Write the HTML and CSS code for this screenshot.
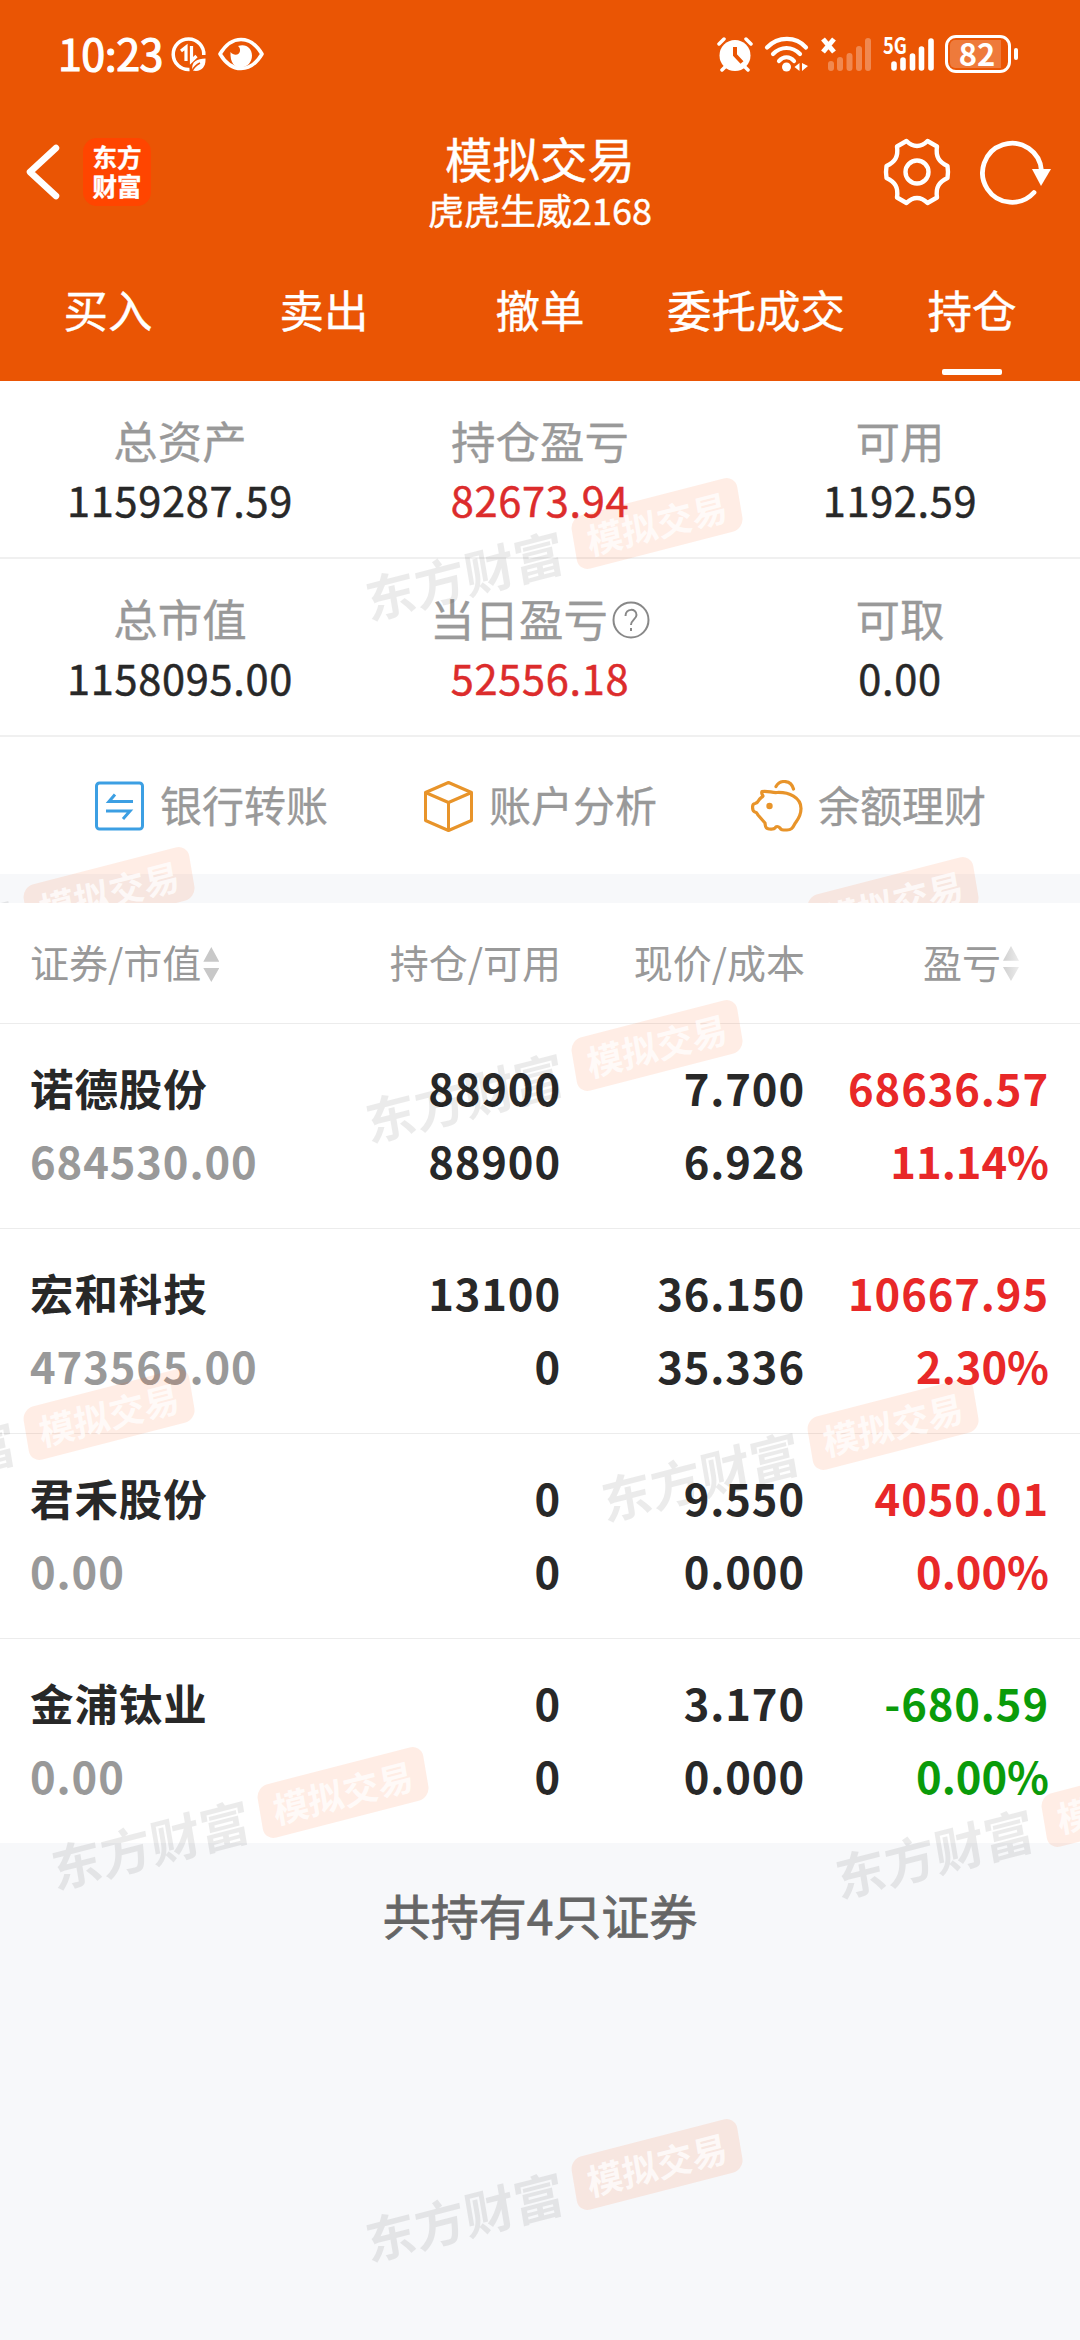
FILE: index.html
```html
<!DOCTYPE html>
<html lang="zh">
<head>
    <meta charset="UTF-8">
    <meta name="viewport" content="width=device-width, initial-scale=1.0">
    <title>模拟交易</title>
    <link rel="stylesheet" href="styles.css">
</head>
<body>
    <header class="header">
        <div class="status-bar">
            <div class="status-left">
                <span class="time">10:23</span>
                <svg class="icon-data" width="36" height="36" viewBox="0 0 36 36" fill="none" stroke="#fff">
                    <path d="M18.500 33.500A15.300 15.300 0 1 1 32.800 19" stroke-width="3.500"/>
                    <path d="M10 15l5-4v14M20.500 10v15l5-5" stroke-width="3.200"/>
                    <path d="M21.500 34.500c-1.500-8 3-11.500 13-12 .5 8-4 14-13 12z" fill="#fff" stroke="none"/>
                    <path d="M21 35c2-4 4-6 8-8" stroke="#ea5504" stroke-width="1.500"/>
                </svg>
                <svg class="icon-eye" width="46" height="34" viewBox="0 0 46 34">
                    <path d="M2 17C8 7 15 2.500 23 2.500S38 7 44 17C38 27 31 31.500 23 31.500S8 27 2 17z" fill="none" stroke="#fff" stroke-width="3.600" stroke-linejoin="round"/>
                    <path d="M20 9c8-3 14 2.500 14 9.500 0 7-5 12-11.500 12S12 25 12.500 15c3 4 9 3.500 9.500-1 .3-3-1-4-2-5z" fill="#fff"/>
                </svg>
            </div>
            <div class="status-right">
                <svg class="icon-alarm" width="36" height="36" viewBox="0 0 36 36" fill="none" stroke="#fff" stroke-linecap="round">
                    <circle cx="18" cy="19.500" r="15.500" fill="#fff" stroke="none"/>
                    <path d="M2 8l5-5M34 8l-5-5M8 31l-3 3M28 31l3 3" stroke-width="3.500"/>
                    <path d="M18 11v8l7 7.500" stroke="#ea5504" stroke-width="4" stroke-linecap="butt"/>
                </svg>
                <svg class="icon-wifi" width="46" height="36" viewBox="0 0 46 36" fill="none" stroke="#fff" stroke-width="4.200" stroke-linecap="round">
                    <path d="M3 11.500C14 0 32 0 42 11.500M9 18c8-8 19-8 27 0M15 25c4-5 11-5 15 0"/>
                    <circle cx="22.500" cy="31" r="4.500" fill="#fff" stroke="none"/>
                    <path d="M35.500 27v8l-5-4zM38 27v8l6-5z" fill="#fff" stroke="none"/>
                </svg>
                <svg class="icon-signal" width="51" height="36" viewBox="0 0 51 36" stroke="#fff" stroke-width="6" stroke-linecap="round">
                    <path d="M2 3l11 13M13 3L2 16" stroke-width="5" stroke-linecap="butt"/>
                    <path d="M10 28v4M19 24v8M28.500 20v12M38 13v19M47 5v27" opacity=".3"/>
                </svg>
                <svg class="icon-signal" width="51" height="36" viewBox="0 0 51 36" stroke="#fff" stroke-width="5.600" stroke-linecap="round">
                    <text class="net-type" x="0" y="18" textLength="24" lengthAdjust="spacingAndGlyphs">5G</text>
                    <path d="M11 28v4M20 24v8M29.500 20v12M38.500 13v19M48 5v27"/>
                </svg>
                <div class="battery"><span class="battery-level">82</span></div>
                <i class="battery-cap"></i>
            </div>
        </div>
        <div class="title-bar">
            <div class="title-left">
                <svg width="36" height="60" viewBox="0 0 36 60" fill="none" stroke="#fff" stroke-width="6.500" stroke-linecap="round" stroke-linejoin="round">
                    <path d="M31 6L5 30l26 24"/>
                </svg>
                <div class="app-logo">东方<br>财富</div>
            </div>
            <div class="title-center">
                <h1>模拟交易</h1>
                <p>虎虎生威2168</p>
            </div>
            <div class="title-right">
                <svg width="68" height="68" viewBox="0 0 68 68" fill="none" stroke="#fff" stroke-width="4.400" stroke-linejoin="round">
                    <path d="M23.500 3C27 6.500 30 8 34 8S41 6.500 44.500 3L54 8.500C52.500 19 56 24 64.500 28Q65.500 34 64.500 40C56 44 52.500 49 54 59.500L44.500 65C41 61.500 38 60 34 60S27 61.500 23.500 65L14 59.500C15.500 49 12 44 3.500 40Q2.500 34 3.500 28C12 24 15.500 19 14 8.500z"/>
                    <circle cx="34" cy="34" r="11.500"/>
                </svg>
                <svg width="72" height="68" viewBox="0 0 72 68" fill="none" stroke="#fff" stroke-width="4.800" stroke-linecap="round">
                    <path d="M54 54.500A29.500 29.500 0 1 1 61.500 33"/>
                    <path d="M52 31h19L61 48z" fill="#fff" stroke="none"/>
                </svg>
            </div>
        </div>
        <nav class="tabs">
            <a class="tab">买入</a>
            <a class="tab">卖出</a>
            <a class="tab">撤单</a>
            <a class="tab">委托成交</a>
            <a class="tab active">持仓</a>
        </nav>
    </header>

    <section class="overview">
        <div class="stats">
            <div class="stat"><span class="label">总资产</span><span class="num">1159287.59</span></div>
            <div class="stat"><span class="label">持仓盈亏</span><span class="num red">82673.94</span></div>
            <div class="stat"><span class="label">可用</span><span class="num">1192.59</span></div>
        </div>
        <div class="stats">
            <div class="stat"><span class="label">总市值</span><span class="num">1158095.00</span></div>
            <div class="stat">
                <span class="label">当日盈亏<svg class="icon-help" width="38" height="38" viewBox="0 0 38 38" fill="none" stroke="#888" stroke-width="2">
                    <circle cx="19" cy="19" r="17.500"/>
                    <path d="M13.500 15c0-8 11-8 11-1 0 4-5.500 5-5.500 10M19 27v3"/>
                </svg></span>
                <span class="num red">52556.18</span>
            </div>
            <div class="stat"><span class="label">可取</span><span class="num">0.00</span></div>
        </div>
        <div class="actions">
            <a class="action">
                <svg width="52" height="52" viewBox="0 0 52 52" fill="none" stroke="#3c9fe3" stroke-width="3">
                    <rect x="3.500" y="3" width="46" height="46" rx="3"/>
                    <path d="M40 21.500H16l6-7M13 31h24l-7 8"/>
                </svg>
                <span>银行转账</span>
            </a>
            <a class="action">
                <svg width="52" height="52" viewBox="0 0 52 52" fill="none" stroke="#e8942a" stroke-width="3" stroke-linejoin="round">
                    <path d="M26.500 2.500l23 10v28l-23 10-23-10v-28zM3.500 12.500l23 10 23-10M26.500 22.500v28"/>
                </svg>
                <span>账户分析</span>
            </a>
            <a class="action">
                <svg width="52" height="52" viewBox="0 0 52 52" fill="none" stroke="#e8942a" stroke-width="3.200" stroke-linecap="round" stroke-linejoin="round">
                    <path d="M25 6.500C29-.5 40-.5 42.500 9"/>
                    <path d="M11 11.500c6-1 10 1.500 15 1 12-.5 24 5 24 16 0 8-4 12-6 15-2.500 5-4 6.500-8 6.500-5 0-6 0-7-2-2-2-4-2-5 0-1 1.500-3 1-6 1-4-.5-3.500-3-4-6l-7-8c-1-2-1-2.500-3-3-3-1-3.500-8 0-8.500 2-.5 3-1.500 4-3.500 1-2 3-2.500 4-4-.5-1.500-2-2.500-1-4.500z"/>
                    <circle cx="18.500" cy="26" r="3.200" fill="#e8942a" stroke="none"/>
                </svg>
                <span>余额理财</span>
            </a>
        </div>
        <div class="watermarks">
            <div class="watermark" style="left: 359px; top: 142px"><b>东方财富</b><i>模拟交易</i></div>
            <div class="watermark" style="left: -189px; top: 511px"><b>东方财富</b><i>模拟交易</i></div>
            <div class="watermark" style="left: 595px; top: 521px"><b>东方财富</b><i>模拟交易</i></div>
        </div>
    </section>

    <main class="holdings">
        <div class="table-head">
            <span>证券/市值<i class="sort"></i></span>
            <span>持仓/可用</span>
            <span>现价/成本</span>
            <span class="profit-head">盈亏<i class="sort faded"></i></span>
        </div>
        <div class="row">
            <div><b>诺德股份</b><b class="gray">684530.00</b></div>
            <div><b>88900</b><b>88900</b></div>
            <div><b>7.700</b><b>6.928</b></div>
            <div class="up"><b>68636.57</b><b class="rate">11.14%</b></div>
        </div>
        <div class="row">
            <div><b>宏和科技</b><b class="gray">473565.00</b></div>
            <div><b>13100</b><b>0</b></div>
            <div><b>36.150</b><b>35.336</b></div>
            <div class="up"><b>10667.95</b><b class="rate">2.30%</b></div>
        </div>
        <div class="row">
            <div><b>君禾股份</b><b class="gray">0.00</b></div>
            <div><b>0</b><b>0</b></div>
            <div><b>9.550</b><b>0.000</b></div>
            <div class="up"><b>4050.01</b><b class="rate">0.00%</b></div>
        </div>
        <div class="row">
            <div><b>金浦钛业</b><b class="gray">0.00</b></div>
            <div><b>0</b><b>0</b></div>
            <div><b>3.170</b><b>0.000</b></div>
            <div class="down"><b>-680.59</b><b class="rate">0.00%</b></div>
        </div>
        <p class="total">共持有4只证券</p>
        <div class="watermarks">
            <div class="watermark" style="left: 359px; top: 142px"><b>东方财富</b><i>模拟交易</i></div>
            <div class="watermark" style="left: -189px; top: 511px"><b>东方财富</b><i>模拟交易</i></div>
            <div class="watermark" style="left: 595px; top: 521px"><b>东方财富</b><i>模拟交易</i></div>
            <div class="watermark" style="left: 45px; top: 889px"><b>东方财富</b><i>模拟交易</i></div>
            <div class="watermark" style="left: 829px; top: 898px"><b>东方财富</b><i>模拟交易</i></div>
            <div class="watermark" style="left: 359px; top: 1261px"><b>东方财富</b><i>模拟交易</i></div>
        </div>
    </main>
</body>
</html>
```

FILE: styles.css
```css
* {
    margin: 0;
    padding: 0;
    box-sizing: border-box;
}

body {
    width: 1080px;
    height: 2340px;
    overflow: hidden;
    display: flex;
    flex-direction: column;
    font-family: "Noto Sans CJK SC", "Noto Sans", sans-serif;
    background: #f7f8fa;
    color: #282828;
    white-space: nowrap;
}

svg {
    display: block;
    flex: none;
}

i {
    font-style: normal;
}

/* 顶部 */
.header {
    height: 381px;
    flex: none;
    background: #ea5504;
    color: #fff;
    -webkit-text-stroke: 0.4px;
}

.status-bar {
    height: 108px;
    padding: 0 62px 0 58px;
    display: flex;
    justify-content: space-between;
    align-items: center;
}

.status-left,
.status-right {
    display: flex;
    align-items: center;
}

.time {
    width: 113px;
    padding-bottom: 4px;
    font-size: 43px;
    line-height: 60px;
    letter-spacing: -0.5px;
    -webkit-text-stroke: 1.2px;
}

.icon-eye {
    margin-left: 11px;
}

.icon-wifi {
    margin-left: 11px;
}

.icon-signal {
    margin-left: 11px;
}

.net-type {
    font-size: 23px;
    font-weight: bold;
    fill: #fff;
    stroke: none;
    -webkit-text-stroke: 0;
}

.battery {
    width: 66px;
    height: 38px;
    margin-left: 11px;
    padding: 2px 7px 2px 2px;
    border: 3px solid #fff;
    border-radius: 11px;
}

.battery-level {
    display: block;
    height: 28px;
    border-radius: 5px 0 0 5px;
    background: rgba(255, 255, 255, 0.22);
    font-size: 31px;
    font-weight: bold;
    line-height: 26px;
    text-align: center;
    text-indent: 3px;
    -webkit-text-stroke: 0;
}

.battery-cap {
    width: 4px;
    height: 12px;
    margin-left: 3px;
    border-radius: 2px;
    background: #fff;
}

.title-bar {
    height: 134px;
    padding: 0 28px 6px 25px;
    display: grid;
    grid-template-columns: 200px 1fr 197px;
    align-items: center;
}

.title-left,
.title-right {
    display: flex;
    align-items: center;
}

.title-left {
    gap: 22px;
}

.title-right {
    justify-content: flex-end;
    gap: 29px;
}

.app-logo {
    width: 68px;
    height: 68px;
    padding-top: 4px;
    border-radius: 14px;
    background: #ff4500;
    font-size: 24.5px;
    font-weight: bold;
    line-height: 29px;
    text-align: center;
}

.title-center {
    text-align: center;
    padding-top: 20px;
}

.title-center h1 {
    font-size: 47.5px;
    font-weight: normal;
    line-height: 54px;
}

.title-center p {
    font-size: 36px;
    line-height: 48px;
}

.tabs {
    display: flex;
    height: 139px;
}

.tab {
    flex: 1;
    display: flex;
    flex-direction: column;
    align-items: center;
    padding-top: 37px;
    font-size: 44.5px;
    line-height: 60px;
}

.tab.active::after {
    content: "";
    width: 60px;
    height: 6px;
    margin-top: 30px;
    border-radius: 2px;
    background: #fff;
}

/* 资产概览 */
.overview {
    height: 522px;
    flex: none;
    position: relative;
    overflow: hidden;
}

.stats {
    height: 178px;
    display: flex;
    background: #fff;
    border-bottom: 2px solid #f0f0f0;
}

.stat {
    flex: 1;
    display: flex;
    flex-direction: column;
    align-items: center;
    padding-top: 29px;
    line-height: 60px;
}

.label {
    display: flex;
    align-items: center;
    font-size: 44.5px;
    color: #999;
    -webkit-text-stroke: 0.3px;
}

.icon-help {
    margin-left: 4px;
    margin-top: 3px;
}

.num {
    font-size: 41.5px;
    letter-spacing: 0.7px;
    line-height: 59px;
    -webkit-text-stroke: 0.5px;
}

.red {
    color: #dc2c2c;
}

.actions {
    height: 137px;
    padding-left: 93px;
    display: flex;
    align-items: center;
    gap: 95px;
    background: #fff;
}

.action {
    width: 234px;
    display: flex;
    align-items: center;
    gap: 15px;
    font-size: 42px;
    color: #999;
    -webkit-text-stroke: 0.3px;
}

.action span {
    padding-bottom: 4px;
}

/* 持仓列表 */
.holdings {
    flex: 1;
    position: relative;
    overflow: hidden;
}

.table-head,
.row {
    padding: 0 31px 0 30px;
    display: grid;
    grid-template-columns: 1fr 230px 244px 244px;
    text-align: right;
    background: #fff;
    border-bottom: 1px solid #ececec;
}

.table-head {
    height: 121px;
    font-size: 39px;
    line-height: 116px;
    color: #999;
}

.table-head span:first-child,
.row div:first-child {
    text-align: left;
}

.profit-head {
    padding-right: 30px;
}

.sort {
    display: inline-block;
    width: 16px;
    height: 35px;
    margin-left: 2px;
    vertical-align: -4px;
    background: #c8c8c8;
    clip-path: polygon(50% 0, 100% 42%, 0 42%, 0 60%, 100% 60%, 50% 100%, 0 60%, 0 42%);
}

.sort.faded {
    vertical-align: -3px;
    background: linear-gradient(to right, #d0d0d0, #ececec);
}

.row {
    height: 205px;
    padding-top: 27px;
    line-height: 73px;
    font-size: 43.5px;
    letter-spacing: 0.9px;
}

.row:nth-child(5) {
    height: 204px;
    border-bottom: 0;
}

.row b {
    display: block;
}

.row .gray {
    color: #999;
}

.row .rate {
    letter-spacing: 0;
}

.up {
    color: #e82828;
}

.down {
    color: #0a9b0a;
}

.total {
    padding-top: 41px;
    font-size: 48px;
    line-height: 60px;
    text-align: center;
    color: #666;
    -webkit-text-stroke: 0.8px;
}

/* 水印浮在内容之上 */
.watermarks {
    position: absolute;
    inset: 0;
    pointer-events: none;
}

.watermark {
    position: absolute;
    width: 387px;
    height: 55px;
    display: flex;
    align-items: center;
    justify-content: space-between;
    transform: matrix(0.968, -0.25, 0.165, 0.97, 0, 0);
}

.watermark b {
    font-size: 51px;
    line-height: 54px;
    color: rgba(0, 0, 0, 0.08);
}

.watermark i {
    width: 171px;
    height: 55px;
    border-radius: 12px;
    background: rgba(255, 90, 20, 0.11);
    font-size: 36px;
    font-weight: bold;
    line-height: 53px;
    text-align: center;
    color: rgba(255, 255, 255, 0.75);
}
```
